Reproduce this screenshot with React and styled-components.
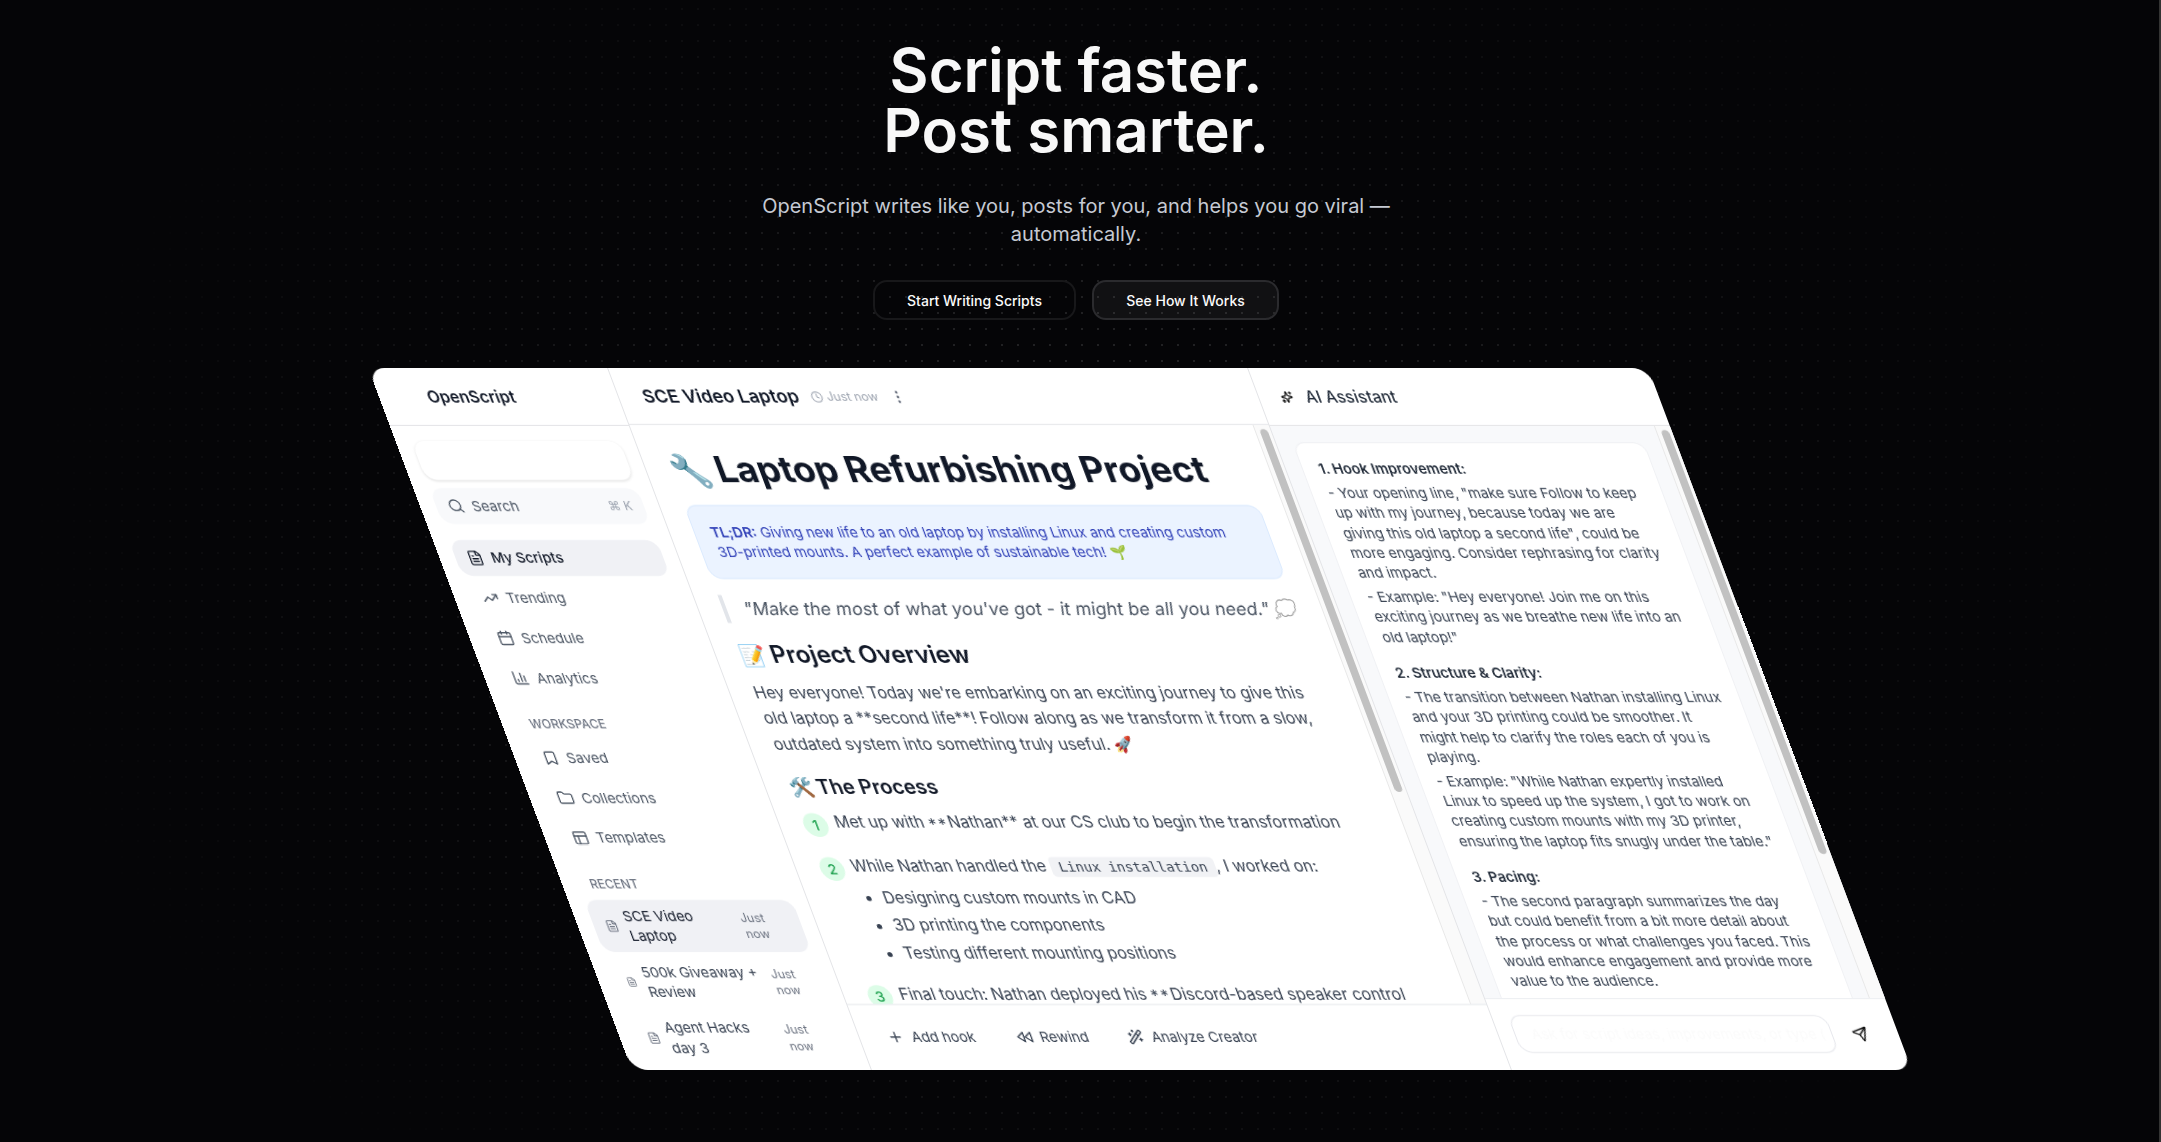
import React from "react";
import styled, { createGlobalStyle, css } from "styled-components";
import {
  Search, FileText, TrendingUp, Calendar, ChartColumn, Bookmark, Folder, PanelsTopLeft,
  Clock, EllipsisVertical, Sparkles, Plus, WandSparkles, Send,
} from "lucide-react";

const Global = createGlobalStyle`
  *, *::before, *::after { box-sizing: border-box; }
  html, body { margin: 0; background: #050507; overflow: hidden; }
  body { font-family: Inter, "Liberation Sans", sans-serif; -webkit-font-smoothing: antialiased; }
  h1, h2, h3, p, ul { margin: 0; padding: 0; }
  button { font: inherit; border: 0; background: none; padding: 0; color: inherit; }
`;

const Page = styled.main`
  position: relative;
  width: 2161px;
  height: 1142px;
  overflow: hidden;
  background: #050507;
  border-right: 2px solid #343433;
`;

const Dots = styled.div`
  position: absolute;
  inset: 0;
  background-image: radial-gradient(circle at 10px 9px, rgba(255, 255, 255, 0.16) 1px, transparent 1px);
  background-size: 16px 16px;
  mask-image: radial-gradient(ellipse 1080px 800px at 1076px 571px, #000 0%, transparent 100%);
`;

const Stack = styled.div`
  position: relative;
  width: 2152px;
  display: flex;
  flex-direction: column;
  align-items: center;
  padding-top: 40px;
`;

const Title = styled.h1`
  font-size: 60px;
  line-height: 60px;
  font-weight: 600;
  text-align: center;
  color: #f8f8f8;
`;

const Lead = styled.p`
  width: 672px;
  margin-top: 32px;
  font-size: 20px;
  line-height: 28px;
  text-align: center;
  color: #c6cad3;
`;

const Actions = styled.div`
  display: flex;
  gap: 16px;
  margin-top: 32px;
`;

const Action = styled.button`
  width: ${(p) => p.$width}px;
  height: 40px;
  border-radius: 14px;
  font-size: 14px;
  font-weight: 500;
  color: #fafafa;
  border: 2px solid ${(p) => (p.$filled ? "#2b2b2e" : "#18181a")};
  background: ${(p) => (p.$filled ? "rgba(255,255,255,0.05)" : "transparent")};
`;

const Window = styled.section`
  width: 1280px;
  height: 702px;
  margin: 48px 0 0 128px;
  display: grid;
  grid-template-columns: 240px 640px 400px;
  border-radius: 16px;
  overflow: hidden;
  background: #fff;
  color: #374151;
  transform: skewX(20.6deg);
  will-change: transform;
`;

const Column = styled.div`
  display: flex;
  flex-direction: column;
  min-width: 0;
  min-height: 0;
  border-right: ${(p) => (p.$last ? "0" : "1px solid #e3e4e7")};
`;

const Bar = styled.header`
  flex: none;
  display: flex;
  align-items: center;
  height: ${(p) => p.$height || 58}px;
  padding: 1px ${(p) => p.$inset || 24}px 0;
  border-bottom: 1px solid #e3e4e7;
  color: #111827;
`;

const Brand = styled.div`
  margin-left: 24.5px;
  font-size: 16px;
  font-weight: 600;
`;

const DocTitle = styled.div`
  font-size: 18px;
  font-weight: 600;
`;

const Stamp = styled.div`
  display: flex;
  align-items: center;
  gap: 4px;
  margin: 0 12px;
  font-size: 12px;
  color: #9ca3af;
`;

const PanelTitle = styled.div`
  margin-left: 13px;
  font-size: 16px;
  font-weight: 500;
  color: #1f2937;
`;

const SideBody = styled.div`
  display: flex;
  flex-direction: column;
  padding: 15px 15px 0 16px;
`;

const NewScript = styled.div`
  height: 39px;
  margin-bottom: 8px;
  border-radius: 12px;
  background: #fff;
  box-shadow: 0 1px 3px rgba(0, 0, 0, 0.13);
`;

const navRow = css`
  display: flex;
  align-items: center;
  gap: 8px;
  padding: 0 12px;
  border-radius: 12px;
  font-size: 14px;
  line-height: 20px;
`;

const SearchRow = styled.div`
  ${navRow}
  height: 36px;
  margin-bottom: 16px;
  background: #f8f9fb;
  color: #4b5563;
`;

const Shortcut = styled.span`
  margin-left: auto;
  font-size: 12px;
  color: #9ca3af;
`;

const NavRow = styled.div`
  ${navRow}
  height: 36px;
  margin-bottom: ${(p) => (p.$end ? 0 : 4)}px;
  background: ${(p) => (p.$active ? "#f0f1f5" : "transparent")};
  color: ${(p) => (p.$active ? "#111827" : "#4b5563")};
  font-weight: ${(p) => (p.$active ? 500 : 400)};
`;

const Group = styled.div`
  padding: 20px 12px 8px;
  font-size: 12px;
  line-height: 16px;
  font-weight: 500;
  text-transform: uppercase;
  color: #6b7280;
`;

const RecentRow = styled.div`
  ${navRow}
  height: 52px;
  margin-bottom: 4px;
  background: ${(p) => (p.$active ? "#f0f1f5" : "transparent")};
  color: ${(p) => (p.$active ? "#111827" : "#374151")};
  svg { color: #6b7280; min-width: 0; }
`;

const RecentTitle = styled.span`
  flex: 1 1 auto;
`;

const RecentTime = styled.span`
  font-size: 12px;
  line-height: 16px;
  color: #6b7280;
`;

const Scroller = styled.div`
  flex: 1;
  min-height: 0;
  display: grid;
  grid-template-columns: 1fr 16px;
  grid-template-rows: minmax(0, 1fr);
  background: ${(p) => p.$bg};
`;

const Track = styled.div`
  padding: 4px 3px 0 4px;
  background: #fafafa;
  border-left: 1px solid #e8e8e8;
`;

const Thumb = styled.div`
  width: 8px;
  height: ${(p) => p.$length}px;
  border-radius: 4px;
  background: #c1c1c1;
`;

const Doc = styled.article`
  overflow: hidden;
  padding: 24px 24px 0;
`;

const Emoji = styled.span`
  display: inline-block;
  width: ${(p) => p.$width}px;
  font-size: ${(p) => p.$size}px;
  line-height: 1;
  font-weight: 400;
  white-space: nowrap;
`;

const DocHeading = styled.h1`
  height: 40px;
  font-size: 36px;
  line-height: 40px;
  font-weight: 700;
  white-space: nowrap;
  color: #111827;
`;

const Callout = styled.div`
  margin-top: 16px;
  padding: 16px;
  border: 1px solid #dbeafe;
  border-radius: 12px;
  background: #ebf3ff;
  font-size: 14px;
  line-height: 20px;
  color: #3040b8;
`;

const Strong = styled.strong`
  font-weight: 600;
`;

const Quote = styled.div`
  height: 28px;
  margin-top: 16px;
  padding-left: 16px;
  border-left: 4px solid #e2e5ea;
  font-size: 18px;
  line-height: 28px;
  white-space: nowrap;
  color: #4b5563;
`;

const Slanted = styled.p`
  transform: skewX(-14deg);
  transform-origin: 0 20px;
`;

const Faint = styled.span`
  opacity: 0.4;
`;

const SectionTitle = styled.h2`
  height: 32px;
  margin-top: 16px;
  font-size: 24px;
  line-height: 32px;
  font-weight: 600;
  color: #111827;
`;

const StepsTitle = styled.h3`
  height: 28px;
  margin-top: 16px;
  font-size: 20px;
  line-height: 28px;
  font-weight: 600;
  color: #111827;
`;

const Para = styled.p`
  margin-top: 8px;
  font-size: 16px;
  line-height: 26px;
`;

const Steps = styled.div`
  display: flex;
  flex-direction: column;
  gap: 16px;
  margin-top: 8px;
`;

const Step = styled.div`
  display: flex;
  gap: 8px;
  font-size: 16px;
  line-height: 26px;
  white-space: nowrap;
`;

const StepNumber = styled.span`
  flex: none;
  width: 24px;
  height: 24px;
  margin-top: 4px;
  border-radius: 50%;
  background: #dcfce7;
  color: #22a352;
  font-size: 14px;
  line-height: 24px;
  font-weight: 500;
  text-align: center;
`;

const Stars = styled.span`
  position: relative;
  top: 2px;
  letter-spacing: 1.9px;
`;

const Code = styled.code`
  padding: 2px 8px;
  border-radius: 4px;
  background: #f1f2f5;
  font-family: "DejaVu Sans Mono", monospace;
  font-size: 13.7px;
  line-height: 1;
`;

const Bullets = styled.ul`
  margin-top: 4px;
  padding-left: 20px;
  line-height: 28px;
  margin-bottom: -2px;
`;

const DocFooter = styled.footer`
  flex: none;
  display: flex;
  align-items: center;
  height: 66px;
  padding: 0 28px 2px;
  border-top: 1px solid #e5e7eb;
`;

const Tool = styled.button`
  display: flex;
  align-items: center;
  gap: 8px;
  margin-right: ${(p) => p.$after || 0}px;
  font-size: 14px;
  color: #374151;
`;

const Chat = styled.div`
  overflow: hidden;
  padding: 15.6px 16px 0;
`;

const Message = styled.div`
  height: 700px;
  padding: 16px;
  border: 1px solid #f0f1f4;
  border-radius: 12px;
  background: #fff;
  font-size: 14px;
  line-height: 20px;
`;

const Topic = styled.div`
  margin-top: ${(p) => (p.$first ? 0 : 16)}px;
  font-weight: 600;
  color: #1f2937;
`;

const Note = styled.p`
  margin-top: 4px;
`;

const ChatFooter = styled.footer`
  flex: none;
  display: flex;
  align-items: center;
  gap: 20px;
  height: 72px;
  padding: 0 16px 2px;
  border-top: 1px solid #eceef1;
  color: #111;
`;

const Prompt = styled.div`
  width: 318px;
  height: 38px;
  padding: 0 16px;
  overflow: hidden;
  border: 1px solid #e6e7ec;
  border-radius: 12px;
  font-size: 14px;
  line-height: 36px;
  white-space: nowrap;
  color: #fbfbfb;
`;

const navMain = [
  [TrendingUp, "Trending"],
  [Calendar, "Schedule"],
  [ChartColumn, "Analytics"],
];
const navWorkspace = [
  [Bookmark, "Saved"],
  [Folder, "Collections"],
  [PanelsTopLeft, "Templates"],
];
const recents = ["SCE Video Laptop", "500k Giveaway + Review", "Agent Hacks day 3"];

const topics = [
  ["1. Hook Improvement:", [
    '- Your opening line, "make sure Follow to keep up with my journey, because today we are giving this old laptop a second life", could be more engaging. Consider rephrasing for clarity and impact.',
    '- Example: "Hey everyone! Join me on this exciting journey as we breathe new life into an old laptop!"',
  ]],
  ["2. Structure & Clarity:", [
    "- The transition between Nathan installing Linux and your 3D printing could be smoother. It might help to clarify the roles each of you is playing.",
    '- Example: "While Nathan expertly installed Linux to speed up the system, I got to work on creating custom mounts with my 3D printer, ensuring the laptop fits snugly under the table."',
  ]],
  ["3. Pacing:", [
    "- The second paragraph summarizes the day but could benefit from a bit more detail about the process or what challenges you faced. This would enhance engagement and provide more value to the audience.",
  ]],
];

function RewindIcon() {
  return (
    <svg width="16" height="16" viewBox="0 0 24 24" fill="none" stroke="currentColor" strokeWidth="2" strokeLinecap="round" strokeLinejoin="round">
      <polygon points="11 19 2 12 11 5 11 19" />
      <polygon points="22 19 13 12 22 5 22 19" />
    </svg>
  );
}

function Sidebar() {
  return (
    <Column>
      <Bar><Brand>OpenScript</Brand></Bar>
      <SideBody>
        <NewScript />
        <SearchRow><Search size={16} />Search<Shortcut>⌘ K</Shortcut></SearchRow>
        <NavRow $active><FileText size={16} />My Scripts</NavRow>
        {navMain.map(([Icon, label], i) => (
          <NavRow key={label} $end={i === 2}><Icon size={16} />{label}</NavRow>
        ))}
        <Group>Workspace</Group>
        {navWorkspace.map(([Icon, label], i) => (
          <NavRow key={label} $end={i === 2}><Icon size={16} />{label}</NavRow>
        ))}
        <Group>Recent</Group>
        {recents.map((title, i) => (
          <RecentRow key={title} $active={i === 0}>
            <FileText size={14} />
            <RecentTitle>{title}</RecentTitle>
            <RecentTime>Just now</RecentTime>
          </RecentRow>
        ))}
      </SideBody>
    </Column>
  );
}

function Editor() {
  return (
    <Column>
      <Bar $height={57}>
        <DocTitle>SCE Video Laptop</DocTitle>
        <Stamp><Clock size={12} />Just now</Stamp>
        <EllipsisVertical size={16} color="#6b7280" />
      </Bar>
      <Scroller $bg="#fff">
        <Doc>
          <DocHeading><Emoji $width={45.5} $size={32}>🔧</Emoji>Laptop Refurbishing Project</DocHeading>
          <Callout>
            <Strong>TL;DR:</Strong> Giving new life to an old laptop by installing Linux and creating custom 3D-printed mounts. A perfect example of sustainable tech! 🌱
          </Callout>
          <Quote><Slanted>"Make the most of what you've got - it might be all you need." <Faint>💭</Faint></Slanted></Quote>
          <SectionTitle><Emoji $width={31} $size={21}>📝</Emoji>Project Overview</SectionTitle>
          <Para>
            Hey everyone! Today we're embarking on an exciting journey to give this old laptop a **second life**! Follow along as we transform it from a slow, outdated system into something truly useful. 🚀
          </Para>
          <StepsTitle><Emoji $width={27.5} $size={19}>🛠️</Emoji>The Process</StepsTitle>
          <Steps>
            <Step><StepNumber>1</StepNumber><div>Met up with <Stars>**</Stars>Nathan** at our CS club to begin the transformation</div></Step>
            <Step>
              <StepNumber>2</StepNumber>
              <div>
                While Nathan handled the <Code>Linux installation</Code>, I worked on:
                <Bullets>
                  <li>Designing custom mounts in CAD</li>
                  <li>3D printing the components</li>
                  <li>Testing different mounting positions</li>
                </Bullets>
              </div>
            </Step>
            <Step><StepNumber>3</StepNumber><div>Final touch: Nathan deployed his <Stars>**</Stars>Discord-based speaker control</div></Step>
          </Steps>
        </Doc>
        <Track><Thumb $length={363} /></Track>
      </Scroller>
      <DocFooter>
        <Tool $after={41}><Plus size={16} />Add hook</Tool>
        <Tool $after={39}><RewindIcon />Rewind</Tool>
        <Tool><WandSparkles size={16} />Analyze Creator</Tool>
      </DocFooter>
    </Column>
  );
}

function Assistant() {
  return (
    <Column $last>
      <Bar $inset={21.5}>
        <Sparkles size={12} strokeWidth={2.4} color="#111" />
        <PanelTitle>AI Assistant</PanelTitle>
      </Bar>
      <Scroller $bg="#f8f9fb">
        <Chat>
          <Message>
            {topics.map(([title, notes], i) => (
              <React.Fragment key={title}>
                <Topic $first={i === 0}>{title}</Topic>
                {notes.map((n) => <Note key={n}>{n}</Note>)}
              </React.Fragment>
            ))}
          </Message>
        </Chat>
        <Track><Thumb $length={424} /></Track>
      </Scroller>
      <ChatFooter>
        <Prompt>Ask for script ideas, improvements, or type (</Prompt>
        <Send size={16} />
      </ChatFooter>
    </Column>
  );
}

export default function App() {
  return (
    <Page>
      <Global />
      <Dots />
      <Stack>
        <Title>Script faster.<br />Post smarter.</Title>
        <Lead>OpenScript writes like you, posts for you, and helps you go viral — automatically.</Lead>
        <Actions>
          <Action $width={203}>Start Writing Scripts</Action>
          <Action $width={187} $filled>See How It Works</Action>
        </Actions>
        <Window>
          <Sidebar />
          <Editor />
          <Assistant />
        </Window>
      </Stack>
    </Page>
  );
}
